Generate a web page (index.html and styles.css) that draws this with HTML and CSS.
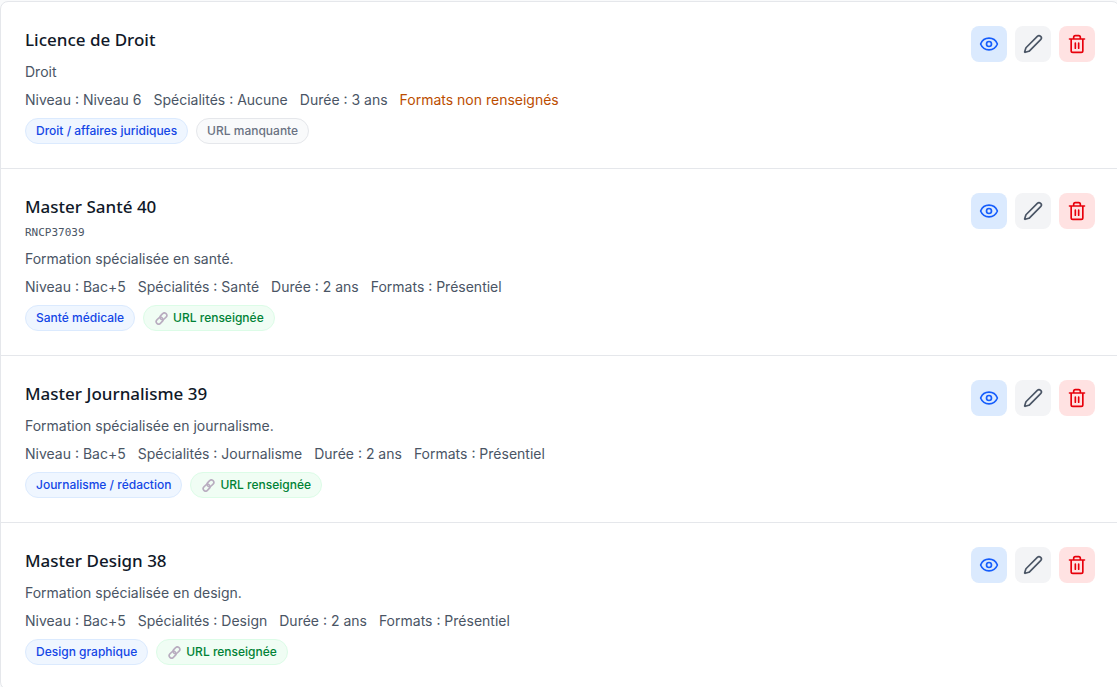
FILE: index.html
```html
<!DOCTYPE html>
<html lang="fr">
<head>
  <meta charset="UTF-8">
  <meta name="viewport" content="width=device-width, initial-scale=1.0">
  <title>Formations</title>
  <link rel="stylesheet" href="styles.css">
</head>

<body>
  <svg class="sprite" aria-hidden="true">
    <symbol id="eye" viewBox="0 0 24 24">
      <path d="M2.06 12.35a1 1 0 0 1 0-.7 10.75 10.75 0 0 1 19.88 0 1 1 0 0 1 0 .7 10.75 10.75 0 0 1-19.88 0"/>
      <circle cx="12" cy="12" r="3"/>
    </symbol>
    <symbol id="pencil" viewBox="0 0 24 24">
      <path d="M21.17 6.81a1 1 0 0 0-3.98-3.98L3.84 16.17a2 2 0 0 0-.5.83l-1.32 4.35a.5.5 0 0 0 .62.62l4.35-1.32a2 2 0 0 0 .83-.5z"/>
    </symbol>
    <symbol id="trash" viewBox="0 0 24 24">
      <path d="M3 6h18M19 6v14a2 2 0 0 1-2 2H7a2 2 0 0 1-2-2V6M8 6V4a2 2 0 0 1 2-2h4a2 2 0 0 1 2 2v2M10 11v6M14 11v6"/>
    </symbol>
    <symbol id="link" viewBox="0 0 24 24">
      <rect x="8.5" y="3.5" width="14" height="9" rx="4.5" transform="rotate(-45 15.5 8)"/>
      <rect x="1.5" y="11.5" width="14" height="9" rx="4.5" transform="rotate(-45 8.5 16)"/>
    </symbol>
  </svg>

  <main class="list">
    <article class="item">
      <div class="content">
        <h3 class="title">Licence de Droit</h3>
        <p class="text">Droit</p>
        <div class="meta">
          <span>Niveau : Niveau 6</span>
          <span>Spécialités : Aucune</span>
          <span>Durée : 3 ans</span>
          <span class="warning">Formats non renseignés</span>
        </div>
        <div class="tags">
          <span class="tag tag-blue">Droit / affaires juridiques</span>
          <span class="tag tag-gray">URL manquante</span>
        </div>
      </div>
      <div class="actions">
        <button class="btn btn-view" type="button" aria-label="Voir"><svg class="icon"><use href="#eye"/></svg></button>
        <button class="btn btn-edit" type="button" aria-label="Modifier"><svg class="icon"><use href="#pencil"/></svg></button>
        <button class="btn btn-delete" type="button" aria-label="Supprimer"><svg class="icon"><use href="#trash"/></svg></button>
      </div>
    </article>

    <article class="item">
      <div class="content">
        <h3 class="title">Master Santé 40</h3>
        <p class="code">RNCP37039</p>
        <p class="text">Formation spécialisée en santé.</p>
        <div class="meta">
          <span>Niveau : Bac+5</span>
          <span>Spécialités : Santé</span>
          <span>Durée : 2 ans</span>
          <span>Formats : Présentiel</span>
        </div>
        <div class="tags">
          <span class="tag tag-blue">Santé médicale</span>
          <span class="tag tag-green"><svg class="link-icon"><use href="#link"/></svg>URL renseignée</span>
        </div>
      </div>
      <div class="actions">
        <button class="btn btn-view" type="button" aria-label="Voir"><svg class="icon"><use href="#eye"/></svg></button>
        <button class="btn btn-edit" type="button" aria-label="Modifier"><svg class="icon"><use href="#pencil"/></svg></button>
        <button class="btn btn-delete" type="button" aria-label="Supprimer"><svg class="icon"><use href="#trash"/></svg></button>
      </div>
    </article>

    <article class="item">
      <div class="content">
        <h3 class="title">Master Journalisme 39</h3>
        <p class="text">Formation spécialisée en journalisme.</p>
        <div class="meta">
          <span>Niveau : Bac+5</span>
          <span>Spécialités : Journalisme</span>
          <span>Durée : 2 ans</span>
          <span>Formats : Présentiel</span>
        </div>
        <div class="tags">
          <span class="tag tag-blue">Journalisme / rédaction</span>
          <span class="tag tag-green"><svg class="link-icon"><use href="#link"/></svg>URL renseignée</span>
        </div>
      </div>
      <div class="actions">
        <button class="btn btn-view" type="button" aria-label="Voir"><svg class="icon"><use href="#eye"/></svg></button>
        <button class="btn btn-edit" type="button" aria-label="Modifier"><svg class="icon"><use href="#pencil"/></svg></button>
        <button class="btn btn-delete" type="button" aria-label="Supprimer"><svg class="icon"><use href="#trash"/></svg></button>
      </div>
    </article>

    <article class="item">
      <div class="content">
        <h3 class="title">Master Design 38</h3>
        <p class="text">Formation spécialisée en design.</p>
        <div class="meta">
          <span>Niveau : Bac+5</span>
          <span>Spécialités : Design</span>
          <span>Durée : 2 ans</span>
          <span>Formats : Présentiel</span>
        </div>
        <div class="tags">
          <span class="tag tag-blue">Design graphique</span>
          <span class="tag tag-green"><svg class="link-icon"><use href="#link"/></svg>URL renseignée</span>
        </div>
      </div>
      <div class="actions">
        <button class="btn btn-view" type="button" aria-label="Voir"><svg class="icon"><use href="#eye"/></svg></button>
        <button class="btn btn-edit" type="button" aria-label="Modifier"><svg class="icon"><use href="#pencil"/></svg></button>
        <button class="btn btn-delete" type="button" aria-label="Supprimer"><svg class="icon"><use href="#trash"/></svg></button>
      </div>
    </article>
  </main>
</body>

</html>
```
FILE: styles.css
```css
* {
  box-sizing: border-box;
}

body {
  margin: 0;
  padding-top: 1px;
  overflow-x: hidden;
  background-color: #f9fafb;
  font-family: Inter, sans-serif;
  font-size: 14px;
  line-height: 20px;
  color: #4a5565;
}

.sprite {
  display: none;
}

.list {
  margin-right: -3px;
  background-color: #fff;
  border: 1px solid #e5e7eb;
  border-radius: 8px;
}

.item {
  display: flex;
  justify-content: space-between;
  align-items: flex-start;
  gap: 16px;
  padding: 24px;
}

.item + .item {
  border-top: 1px solid #e5e7eb;
}

.content {
  display: flex;
  flex-direction: column;
  gap: 8px;
  min-width: 0;
}

.title {
  margin: 0;
  font-family: "Noto Sans", sans-serif;
  font-size: 17px;
  font-weight: 500;
  line-height: 28px;
  color: #101828;
}

.text {
  margin: 0;
}

.code {
  margin: -4px 0 0;
  font-family: "DejaVu Sans Mono", monospace;
  font-size: 11px;
  line-height: 16px;
}

.meta {
  display: flex;
  flex-wrap: wrap;
  column-gap: 12px;
}

.warning {
  color: #bb4d00;
}

.tags {
  display: flex;
  flex-wrap: wrap;
  gap: 8px;
}

.tag {
  display: inline-flex;
  align-items: center;
  padding: 4px 10px;
  border: 1px solid;
  border-radius: 13px;
  font-size: 12px;
  font-weight: 500;
  line-height: 16px;
}

.tag-blue {
  background-color: #eff6ff;
  border-color: #dbeafe;
  color: #1447e6;
}

.tag-gray {
  background-color: #f9fafb;
  border-color: #e5e7eb;
  color: #6a7282;
}

.tag-green {
  background-color: #f0fdf4;
  border-color: #dcfce7;
  color: #008236;
}

.link-icon {
  width: 13px;
  height: 13px;
  margin: 0 5px 0 1px;
  fill: none;
  stroke: #b9adc0;
  stroke-width: 3;
}

.actions {
  display: flex;
  gap: 8px;
}

.btn {
  display: flex;
  justify-content: center;
  align-items: center;
  width: 36px;
  height: 36px;
  padding: 0;
  border: 0;
  border-radius: 8px;
  cursor: pointer;
}

.btn-view {
  background-color: #dbeafe;
  color: #155dfc;
}

.btn-edit {
  background-color: #f3f4f6;
  color: #4a5565;
}

.btn-delete {
  background-color: #ffe2e2;
  color: #e7000b;
}

.icon {
  width: 20px;
  height: 20px;
  fill: none;
  stroke: currentColor;
  stroke-width: 2;
  stroke-linecap: round;
  stroke-linejoin: round;
}
```
